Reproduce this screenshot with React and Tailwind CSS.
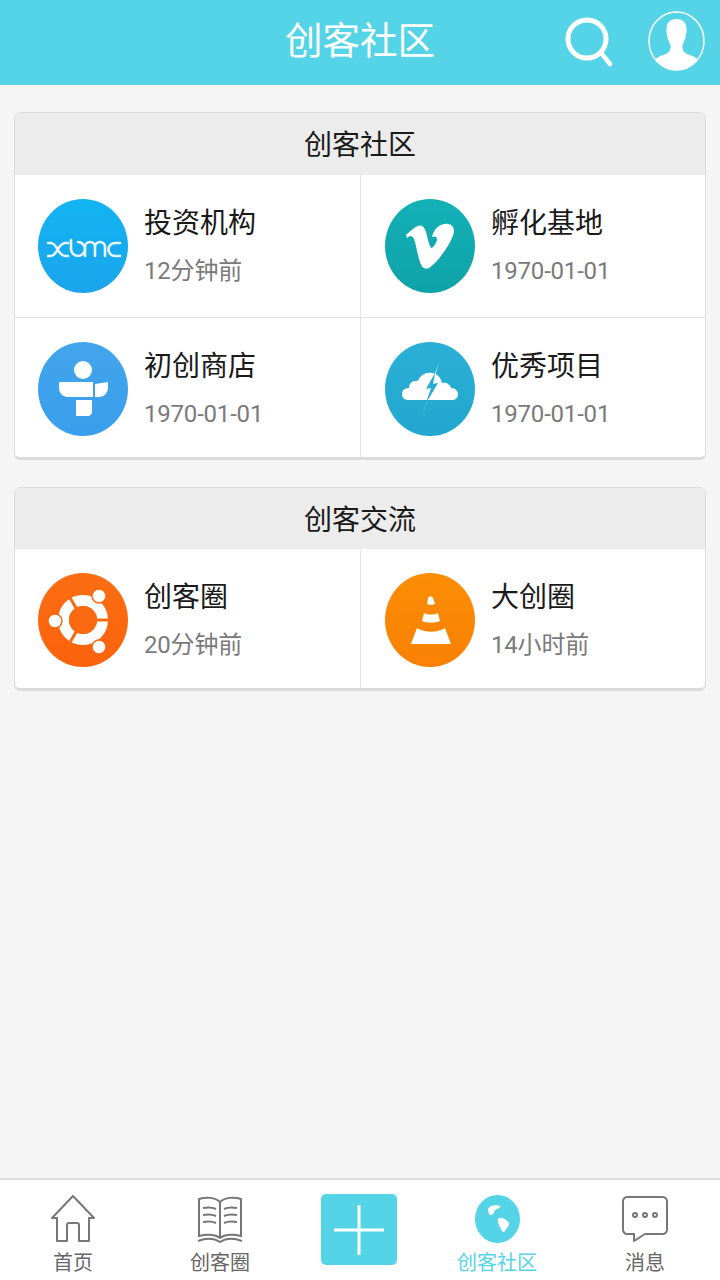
const CYAN = '#54d4e6';

// logo drawings, viewBox 0 0 90 94
function XbmcLogo() {
  return (
    <g fill="none" stroke="#e8f7fe" strokeWidth="2.6" strokeLinecap="round">
      <path d="M10 44 H13 C19 44 20 57 27 57 H30 M30 44 H27 C20 44 19 57 13 57 H10" />
      <path d="M33 41 V50 A7 7 0 1 0 40 43" />
      <path d="M47 57 V48 A5 5 0 0 1 57 48 V57 M57 48 A5 5 0 0 1 67 48 V57" />
      <path d="M82 44 H77 A6.500 6.500 0 0 0 77 57 H82" />
    </g>
  );
}

function TuneLogo() {
  return (
    <g fill="#fff">
      <circle cx="45" cy="28" r="9" />
      <path d="M21 40 H55 V55 H30 C25 55 21 51 21 46 Z" />
      <path d="M57 42 L70 40 V45 C70 51 66 55 61 55 H57 Z" />
      <path d="M38 58 H54 V70 C54 72 52 74 50 74 H38 Z" />
    </g>
  );
}

function VimeoLogo() {
  return (
    <path
      fill="#fff"
      d="M21 36 C27 31 33 25 37 27 C42 29 42 42 46 49 C48 49 52 44 52 40 C52 37 48 37 47 38 C49 29 56 24 63 25 C70 26 70 33 67 39 C62 50 52 64 44 69 C37 72 35 64 33 56 C31 48 30 38 26 37 C24 37 22 39 22 39 Z"
    />
  );
}

function CloudLogo() {
  return (
    <g>
      <path
        fill="#fff"
        d="M23 58 C19 58 17 55 17 52 C17 48 20 46 24 46 C24 41 28 38 33 39 C35 33 41 30 47 31 C53 32 56 36 57 41 C61 40 65 42 66 46 C70 46 73 49 73 52 C73 56 70 58 67 58 Z"
      />
      <path fill="#cdeef7" d="M54 21 L44 46 L48 45 L37 74 L42 60 L53 40 L48 41 Z" />
      <path fill="#25acd2" d="M50 31 L41 47 L46 46 L41 61 L53 41 L48 42 Z" />
    </g>
  );
}

function UbuntuLogo() {
  return (
    <g>
      <circle cx="45" cy="47" r="19.500" fill="none" stroke="#fff" strokeWidth="11" />
      <path stroke="#fb6a10" strokeWidth="3" d="M45 47 L72 47 M45 47 L31 23 M45 47 L31 71" />
      <circle cx="45" cy="47" r="14" fill="#fb6a10" />
      <g fill="#fff" stroke="#fb6a10" strokeWidth="1.500">
        <circle cx="61" cy="23" r="7" />
        <circle cx="17" cy="48" r="7" />
        <circle cx="61" cy="74" r="7" />
      </g>
    </g>
  );
}

function ConeLogo() {
  return (
    <g fill="#fff">
      <path d="M42 31 L43 25 C44 23 47 23 48 25 L50 31 C48 32 44 32 42 31 Z" />
      <path d="M39 40 C43 42 49 42 53 40 L55 48 C50 50 42 50 37 48 Z" />
      <path d="M32 55 C40 60 52 60 60 55 L66 71 H26 Z" />
    </g>
  );
}

function LogoCircle({ from, to, children }) {
  return (
    <svg width="90" height="94" viewBox="0 0 90 94" className="shrink-0">
      <defs>
        <linearGradient id={from} x1="0" y1="0" x2="0" y2="1">
          <stop offset="0" stopColor={from} />
          <stop offset="1" stopColor={to} />
        </linearGradient>
      </defs>
      <ellipse cx="45" cy="47" rx="45" ry="47" fill={`url(#${from})`} />
      {children}
    </svg>
  );
}

function Cell({ item, left, last }) {
  return (
    <div
      className={`flex items-start pt-6 ${left ? 'pl-[23px] border-r border-[#e3e3e3]' : 'pl-6'} ${
        last ? 'h-[139px]' : 'h-[143px] border-b border-b-[#e3e3e3]'
      }`}
    >
      <LogoCircle from={item.from} to={item.to}>
        {item.logo}
      </LogoCircle>
      <div className="ml-4 pt-px flex flex-col">
        <span className="text-[28px] leading-[47px] text-[#1a1a1a]">{item.title}</span>
        <span className="text-[24px] leading-[48px] text-[#7a7a7a] tracking-[-0.2px]">{item.time}</span>
      </div>
    </div>
  );
}

function Section({ title, items, headClass }) {
  return (
    <section className="mx-3.5 rounded-md border border-[#dcdcdc] border-b-[3px] bg-white overflow-hidden">
      <div className={`flex items-center justify-center pt-1 bg-[#ececec] text-[28px] text-[#1a1a1a] ${headClass}`}>{title}</div>
      <div className="grid grid-cols-[346px_1fr]">
        {items.map((item, i) => (
          <Cell key={item.title} item={item} left={i % 2 === 0} last={i >= items.length - 2} />
        ))}
      </div>
    </section>
  );
}

function NavItem({ label, active, className, children }) {
  return (
    <div className={`flex flex-col items-center ${className}`}>
      <div className="h-[50px] flex items-center justify-center">{children}</div>
      <span className={`mt-[5px] text-[20px] leading-[28px] ${active ? 'text-[#54d4e6]' : 'text-[#666]'}`}>{label}</span>
    </div>
  );
}

const community = [
  { title: '投资机构', time: '12分钟前', from: '#12b4f2', to: '#1ba4ec', logo: <XbmcLogo /> },
  { title: '孵化基地', time: '1970-01-01', from: '#14b0b8', to: '#0ea3a8', logo: <VimeoLogo /> },
  { title: '初创商店', time: '1970-01-01', from: '#42a5ec', to: '#3a9eec', logo: <TuneLogo /> },
  { title: '优秀项目', time: '1970-01-01', from: '#2ab0d6', to: '#22a8d0', logo: <CloudLogo /> },
];

const exchange = [
  { title: '创客圈', time: '20分钟前', from: '#fb6e14', to: '#fb620c', logo: <UbuntuLogo /> },
  { title: '大创圈', time: '14小时前', from: '#fb8e04', to: '#f98004', logo: <ConeLogo /> },
];

export default function App() {
  return (
    <div className="w-[720px] h-[1280px] flex flex-col bg-[#f5f5f5] font-['Roboto','Noto_Sans_CJK_SC',sans-serif]">
      <header className="h-[85px] shrink-0 grid grid-cols-[1fr_auto_1fr] items-center bg-[#54d4e6] pb-[3px]">
        <div />
        <h1 className="text-[37.500px] font-normal text-white">创客社区</h1>
        <div className="flex items-start justify-end gap-[35px] pr-[15px]">
          <svg width="48" height="50" viewBox="0 0 48 50" fill="none" stroke="#fff" className="mt-[6px]">
            <circle cx="22" cy="22" r="19" strokeWidth="5" />
            <path d="M36 36 L45 47" strokeWidth="4.500" strokeLinecap="round" />
          </svg>
          <svg width="57" height="60" viewBox="0 0 57 60">
            <defs>
              <clipPath id="avatar">
                <ellipse cx="28.500" cy="30" rx="27" ry="28.500" />
              </clipPath>
            </defs>
            <ellipse cx="28.500" cy="30" rx="27.500" ry="29" fill="none" stroke="#fff" strokeWidth="1.500" />
            <g clipPath="url(#avatar)" fill="#fff">
              <path d="M28.500 8 C21 8 18 13 18.500 20 C19 27 21 31 22.500 34 C23 38 22 41 18 43 C12 45 6 47 3 54 L3 60 H54 V54 C51 47 45 45 39 43 C35 41 34 38 34.500 34 C36 31 38 27 38.500 20 C39 13 36 8 28.500 8 Z" />
            </g>
          </svg>
        </div>
      </header>

      <main className="flex-1 flex flex-col gap-[27px] pt-[27px]">
        <Section title="创客社区" items={community} headClass="h-[62px]" />
        <Section title="创客交流" items={exchange} headClass="h-[61px]" />
      </main>

      <nav className="h-[102px] shrink-0 flex items-start pt-[14px] bg-white border-t-2 border-[#dddddd]">
        <NavItem label="首页" className="w-[146px]">
          <svg width="46" height="50" viewBox="0 0 46 50" fill="none" stroke="#777" strokeWidth="2" strokeLinejoin="round">
            <path d="M23 2 L44 24 H39 V47 H29 V31 C29 29 27 29 27 29 H19 C17 29 17 31 17 31 V47 H7 V24 H2 Z" />
          </svg>
        </NavItem>
        <NavItem label="创客圈" className="w-[148px]">
          <svg width="46" height="48" viewBox="0 0 46 48" fill="none" stroke="#777" strokeWidth="2">
            <path d="M23 7 C18 2 9 2 2 4 V41 C9 39 18 39 23 43 C28 39 37 39 44 41 V4 C37 2 28 2 23 7 Z M23 7 V43" />
            <path d="M6 13 C11 12 15 12 19 14 M6 20 C11 19 15 19 19 21 M6 27 C11 26 15 26 19 28 M27 14 C31 12 35 12 40 13 M27 21 C31 19 35 19 40 20 M27 28 C31 26 35 26 40 27" />
            <path d="M1 46 C9 43 17 43 23 47 C29 43 37 43 45 46" />
          </svg>
        </NavItem>
        <div className="w-[130px] flex justify-center">
          <div className="w-[76px] h-[71px] flex items-center justify-center rounded-[5px] bg-[#54d4e6]">
            <svg width="50" height="50" viewBox="0 0 50 50" stroke="#fff" strokeWidth="3">
              <path d="M25 0 V50 M0 25 H50" />
            </svg>
          </div>
        </div>
        <NavItem label="创客社区" active className="w-[146px]">
          <svg width="45" height="48" viewBox="0 0 45 48">
            <ellipse cx="22.500" cy="24" rx="22.500" ry="24" fill={CYAN} />
            <path fill="#fff" d="M13 15 C13 11 19 9 26 11 C24 14 20 14 19 17 C19 20 15 21 14 19 Z" />
            <path fill="#fff" d="M23 24 C26 21 31 24 34 28 C35 31 31 33 30 36 C29 38 27 37 26 34 C25 31 22 28 23 24 Z" />
          </svg>
        </NavItem>
        <NavItem label="消息" className="w-[150px]">
          <svg width="46" height="48" viewBox="0 0 46 48" fill="none" stroke="#777" strokeWidth="2">
            <path d="M5 2 H41 C43 2 45 4 45 6 V35 C45 37 43 39 41 39 H23 L12 46 V39 H5 C3 39 1 37 1 35 V6 C1 4 3 2 5 2 Z" strokeLinejoin="round" />
            <circle cx="13" cy="20" r="2" />
            <circle cx="23" cy="20" r="2" />
            <circle cx="33" cy="20" r="2" />
          </svg>
        </NavItem>
      </nav>
    </div>
  );
}
